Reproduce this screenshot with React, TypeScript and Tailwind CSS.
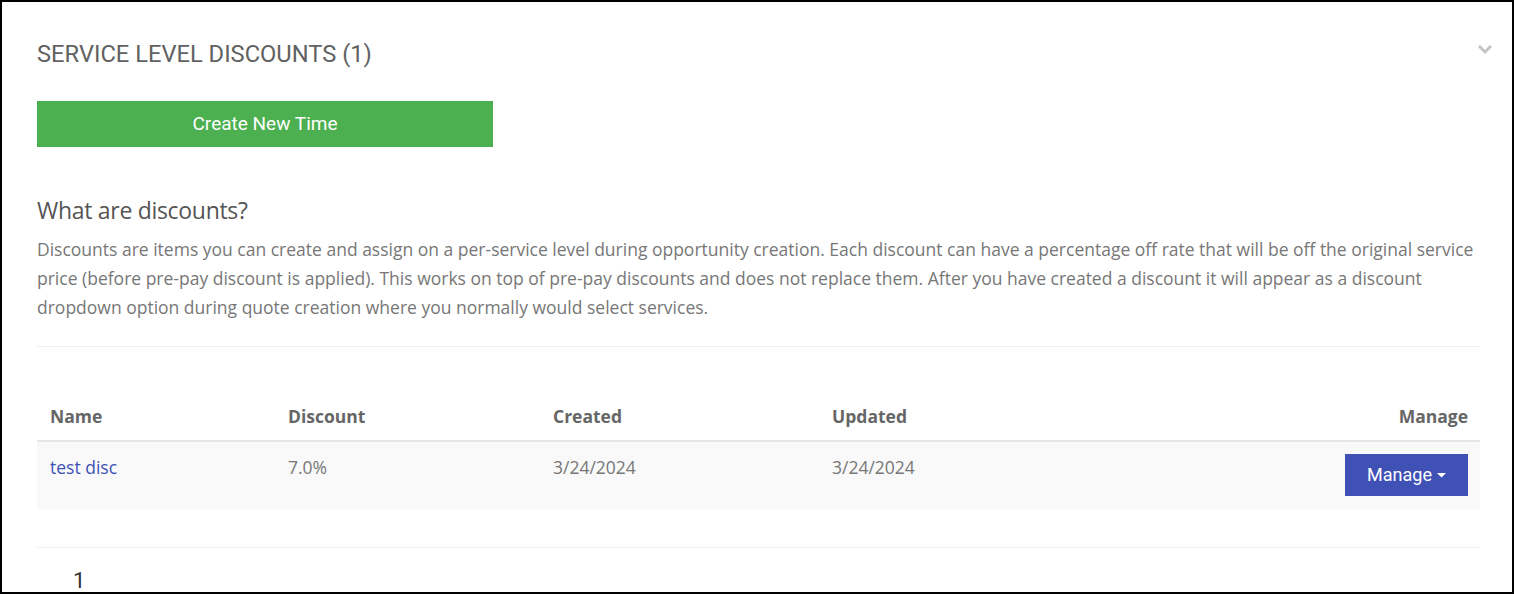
import React from "react";

export default function App() {
  const roboto = { fontFamily: "Roboto, 'Liberation Sans', sans-serif" };
  const open = { fontFamily: "'Open Sans', 'Liberation Sans', sans-serif" };
  return (
    <div className="w-[1514px] h-[594px] overflow-hidden border-2 border-black bg-white box-border">
      <div className="pl-[35px] pr-[32px] pt-[36px] relative">
        <h2 className="text-[23.7px] leading-[32px] text-[#616161]" style={roboto}>
          SERVICE LEVEL DISCOUNTS (1)
        </h2>
        <svg className="absolute right-[20px] top-[43px]" width="14" height="10" viewBox="0 0 14 10">
          <path d="M2 2 L7 7 L12 2" fill="none" stroke="#c4c4c4" strokeWidth="3" strokeLinecap="square" />
        </svg>
        <button
          className="mt-[31px] w-[456px] h-[46px] bg-[#4caf50] text-white text-[19px] flex items-center justify-center"
          style={roboto}
        >
          Create New Time
        </button>
        <h3 className="mt-[47px] text-[23px] leading-[32px] tracking-[-0.3px] text-[#555]" style={open}>
          What are discounts?
        </h3>
        <p className="mt-[9px] text-[17.5px] leading-[29px] text-[#777]" style={open}>
          Discounts are items you can create and assign on a per-service level during opportunity creation. Each discount can have a percentage off rate that will be off the original service price (before pre-pay discount is applied). This works on top of pre-pay discounts and does not replace them. After you have created a discount it will appear as a discount dropdown option during quote creation where you normally would select services.
        </p>
        <div className="mt-[24px] h-px bg-[#eeeeee]" />
        <div className="mt-[46px]" style={open}>
          <div className="grid grid-cols-[238px_265px_279px_1fr_200px] h-[49px] items-center border-b-2 border-[#e6e6e6] text-[17.5px] font-bold text-[#666]">
            <div className="pl-[13px]">Name</div>
            <div className="pl-[13px]">Discount</div>
            <div className="pl-[13px]">Created</div>
            <div className="pl-[13px]">Updated</div>
            <div className="pr-[12px] text-right">Manage</div>
          </div>
          <div className="grid grid-cols-[238px_265px_279px_1fr_200px] h-[67px] bg-[#f9f9f9] text-[17.5px] leading-[26px] text-[#777]">
            <div className="pl-[13px] pt-[12px] text-[#3f51b5]">test disc</div>
            <div className="pl-[13px] pt-[12px]">7.0%</div>
            <div className="pl-[13px] pt-[12px]">3/24/2024</div>
            <div className="pl-[13px] pt-[12px]">3/24/2024</div>
            <div className="pr-[12px] pt-[12px] flex justify-end">
              <button
                className="w-[123px] h-[42px] bg-[#3f51b5] text-white text-[18px] flex items-center justify-center gap-[5px]"
                style={roboto}
              >
                Manage
                <svg width="9" height="5" viewBox="0 0 9 5">
                  <path d="M0 0 L9 0 L4.5 4.5 Z" fill="white" />
                </svg>
              </button>
            </div>
          </div>
          <div className="mt-[38px] h-px bg-[#eeeeee]" />
          <div className="pl-[36px] pt-[18px] text-[22px] leading-[30px] text-[#333]" style={roboto}>
            1
          </div>
        </div>
      </div>
    </div>
  );
}
